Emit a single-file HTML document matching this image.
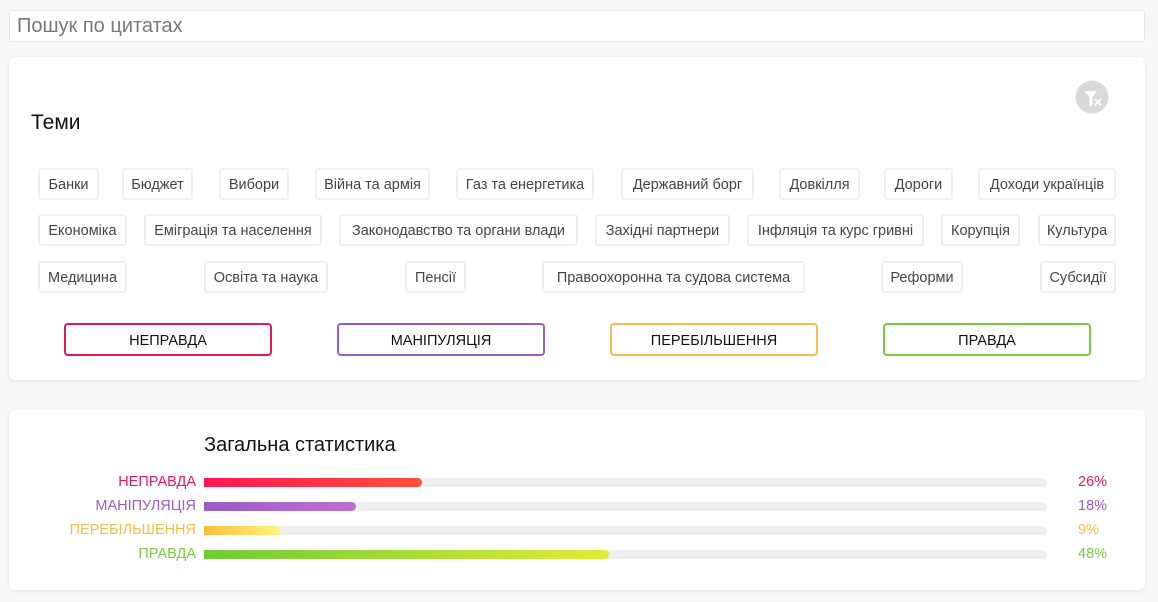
<!DOCTYPE html>
<html><head><meta charset="utf-8"><style>
body{margin:0;width:1158px;height:602px;background:#f7f7f7;font-family:"Liberation Sans",sans-serif;position:relative;overflow:hidden}
.abs{position:absolute}
.search{left:9px;top:10px;background:#fff;border:1px solid #e6e6e6;border-radius:3px;font-size:20px;color:#777;line-height:30px;padding-left:7px;box-sizing:border-box;width:1136px;height:32px}
.card{background:#fff;border-radius:6px;box-shadow:0 1px 4px rgba(0,0,0,.08)}
.tag{position:absolute;height:32px;border:2px solid #f0f0f0;border-radius:3px;box-sizing:border-box;font-size:14.5px;color:#444;line-height:30px;text-align:center;white-space:nowrap}
.btn{position:absolute;top:323px;width:208px;height:33px;border:2px solid;border-radius:4px;box-sizing:border-box;text-align:center;line-height:32px;font-size:14.5px;color:#111}
.lbl{position:absolute;right:962px;font-size:14.5px;line-height:18px}
.bar{position:absolute;left:204px;width:843px;height:9px;background:#eeeeee;border-radius:5px}
.fill{height:9px;border-radius:0 5px 5px 0}
.pct{position:absolute;left:1078px;font-size:14.5px;line-height:18px}
</style></head><body>
<div class="abs search">Пошук по цитатах</div>
<div class="abs card" style="left:9px;top:57px;width:1136px;height:323px"></div>
<div class="abs" style="left:31px;top:111px;font-size:21px;color:#111">Теми</div>
<svg class="abs" style="left:1075px;top:80px" width="34" height="34" viewBox="0 0 34 34"><circle cx="17" cy="17" r="16.5" fill="#d9d9d9"/><path d="M9 11h13l-4.5 6v8l-3 1.5v-9.5z" fill="#fff"/><path d="M20 19l6 6M26 19l-6 6" stroke="#fff" stroke-width="1.8"/></svg>
<div class="tag" style="left:38px;top:168px;width:61px">Банки</div>
<div class="tag" style="left:122px;top:168px;width:71px">Бюджет</div>
<div class="tag" style="left:219px;top:168px;width:70px">Вибори</div>
<div class="tag" style="left:315px;top:168px;width:115px">Війна та армія</div>
<div class="tag" style="left:456px;top:168px;width:138px">Газ та енергетика</div>
<div class="tag" style="left:621px;top:168px;width:133px">Державний борг</div>
<div class="tag" style="left:779px;top:168px;width:81px">Довкілля</div>
<div class="tag" style="left:884px;top:168px;width:69px">Дороги</div>
<div class="tag" style="left:978px;top:168px;width:138px">Доходи українців</div>
<div class="tag" style="left:38px;top:214px;width:89px">Економіка</div>
<div class="tag" style="left:144px;top:214px;width:178px">Еміграція та населення</div>
<div class="tag" style="left:339px;top:214px;width:239px">Законодавство та органи влади</div>
<div class="tag" style="left:595px;top:214px;width:135px">Західні партнери</div>
<div class="tag" style="left:747px;top:214px;width:177px">Інфляція та курс гривні</div>
<div class="tag" style="left:941px;top:214px;width:79px">Корупція</div>
<div class="tag" style="left:1038px;top:214px;width:78px">Культура</div>
<div class="tag" style="left:38px;top:261px;width:89px">Медицина</div>
<div class="tag" style="left:204px;top:261px;width:124px">Освіта та наука</div>
<div class="tag" style="left:405px;top:261px;width:61px">Пенсії</div>
<div class="tag" style="left:542px;top:261px;width:263px">Правоохоронна та судова система</div>
<div class="tag" style="left:881px;top:261px;width:82px">Реформи</div>
<div class="tag" style="left:1040px;top:261px;width:76px">Субсидії</div>
<div class="btn" style="left:64px;border-color:#e0195a">НЕПРАВДА</div>
<div class="btn" style="left:337px;border-color:#9a5cc6">МАНІПУЛЯЦІЯ</div>
<div class="btn" style="left:610px;border-color:#f7bd4c">ПЕРЕБІЛЬШЕННЯ</div>
<div class="btn" style="left:883px;border-color:#7ac943">ПРАВДА</div>

<div class="abs card" style="left:9px;top:410px;width:1136px;height:180px"></div>
<div class="abs" style="left:204px;top:434px;font-size:20px;color:#111">Загальна статистика</div>
<div class="lbl" style="top:473px;color:#e8195a">НЕПРАВДА</div>
<div class="lbl" style="top:497px;color:#9a5cc6">МАНІПУЛЯЦІЯ</div>
<div class="lbl" style="top:521px;color:#f7bd4c">ПЕРЕБІЛЬШЕННЯ</div>
<div class="lbl" style="top:545px;color:#7ac943">ПРАВДА</div>
<div class="bar" style="top:478px"><div class="fill" style="width:218px;background:linear-gradient(90deg,#ff1654,#ff4f3b)"></div></div>
<div class="bar" style="top:502px"><div class="fill" style="width:152px;background:linear-gradient(90deg,#9a5cc6,#c06fd0)"></div></div>
<div class="bar" style="top:526px"><div class="fill" style="width:76px;background:linear-gradient(90deg,#fbbd3c,#fff47a)"></div></div>
<div class="bar" style="top:550px"><div class="fill" style="width:405px;background:linear-gradient(90deg,#6ecb35,#e0ec35)"></div></div>
<div class="pct" style="top:473px;color:#e8195a">26%</div>
<div class="pct" style="top:497px;color:#9a5cc6">18%</div>
<div class="pct" style="top:521px;color:#f7bd4c">9%</div>
<div class="pct" style="top:545px;color:#7ac943">48%</div>
</body></html>
